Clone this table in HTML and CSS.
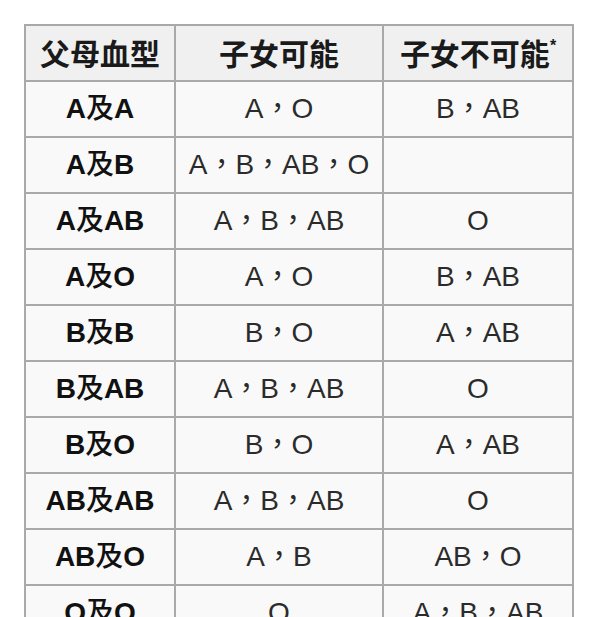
FILE: index.html
```html
<!DOCTYPE html>
<html lang="zh-Hant">
<head>
<meta charset="utf-8">
<title>血型遺傳</title>
<link rel="stylesheet" href="styles.css">
</head>
<body>
<table class="blood">
  <colgroup>
    <col class="c1"><col class="c2"><col class="c3">
  </colgroup>
  <thead>
    <tr><th>父母血型</th><th>子女可能</th><th>子女不可能<sup class="ast">*</sup></th></tr>
  </thead>
  <tbody>
    <tr><th>A<span class="ji">及</span>A</th><td>A，O</td><td>B，AB</td></tr>
    <tr><th>A<span class="ji">及</span>B</th><td>A，B，AB，O</td><td></td></tr>
    <tr><th>A<span class="ji">及</span>AB</th><td>A，B，AB</td><td>O</td></tr>
    <tr><th>A<span class="ji">及</span>O</th><td>A，O</td><td>B，AB</td></tr>
    <tr><th>B<span class="ji">及</span>B</th><td>B，O</td><td>A，AB</td></tr>
    <tr><th>B<span class="ji">及</span>AB</th><td>A，B，AB</td><td>O</td></tr>
    <tr><th>B<span class="ji">及</span>O</th><td>B，O</td><td>A，AB</td></tr>
    <tr><th>AB<span class="ji">及</span>AB</th><td>A，B，AB</td><td>O</td></tr>
    <tr><th>AB<span class="ji">及</span>O</th><td>A，B</td><td>AB，O</td></tr>
    <tr><th>O<span class="ji">及</span>O</th><td>O</td><td>A，B，AB</td></tr>
  </tbody>
</table>
</body>
</html>
```
FILE: styles.css
```css
html, body {
  margin: 0;
  padding: 0;
  background: #ffffff;
}

body {
  padding: 24px 0 0 24px;
  font-family: "Liberation Sans", "Noto Sans CJK TC", sans-serif;
  color: #222222;
}

.blood {
  border-collapse: separate;
  border-spacing: 0;
  border-top: 2px solid #a9a9a9;
  border-left: 2px solid #a9a9a9;
  table-layout: fixed;
  width: 550px;
}

.c1 { width: 150px; }
.c2 { width: 208px; }
.c3 { width: 190px; }

.blood th,
.blood td {
  box-sizing: border-box;
  height: 56px;
  padding: 0;
  border-right: 2px solid #a9a9a9;
  border-bottom: 2px solid #a9a9a9;
  text-align: center;
  vertical-align: middle;
  background: #f9f9f9;
  font-size: 28px;
  line-height: 32px;
  white-space: nowrap;
}

.blood td {
  font-weight: normal;
  color: #2b2b2b;
}

.blood tbody th {
  font-weight: bold;
  color: #111111;
}

.ji {
  font-family: "Noto Sans CJK TC", sans-serif;
  font-weight: 500;
  line-height: 0;
}

.blood thead th {
  background: #f0f0f0;
  font-size: 30px;
  font-weight: bold;
  color: #1a1a1a;
  font-family: "Noto Sans CJK TC", sans-serif;
  padding-bottom: 3px;
}

.ast {
  font-size: 16px;
  font-family: "Liberation Sans", sans-serif;
  vertical-align: top;
  line-height: 16px;
  position: relative;
  top: 2px;
}
```
